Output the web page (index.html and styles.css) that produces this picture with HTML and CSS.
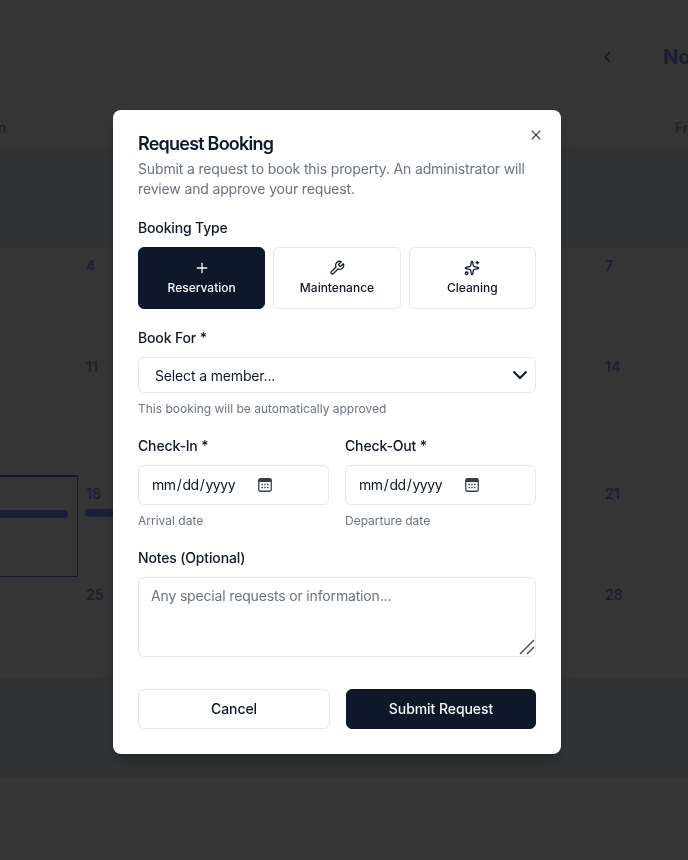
FILE: index.html
```html
<!DOCTYPE html>
<html lang="en">
<head>
<meta charset="utf-8">
<title>Request Booking</title>
<link rel="stylesheet" href="styles.css">
</head>
<body>
<main class="calendar">
  <header class="cal-nav">
    <svg class="cal-chevron" viewBox="0 0 24 24" aria-hidden="true"><path d="m15 18-6-6 6-6"/></svg>
    <h1 class="cal-title">November 2025</h1>
  </header>
  <div class="cal-weekdays">
    <span>Sun</span><span>Mon</span><span>Tue</span><span>Wed</span><span>Thu</span><span>Fri</span><span>Sat</span>
  </div>
  <div class="cal-grid">
    <div class="cell muted"></div><div class="cell muted"></div><div class="cell muted"></div><div class="cell muted"></div><div class="cell muted"></div><div class="cell muted"></div><div class="cell muted"></div>
    <div class="cell">2</div><div class="cell">3</div><div class="cell">4</div><div class="cell">5</div><div class="cell">6</div><div class="cell">7</div><div class="cell">8</div>
    <div class="cell">9</div><div class="cell">10</div><div class="cell">11</div><div class="cell">12</div><div class="cell">13</div><div class="cell">14</div><div class="cell">15</div>
    <div class="cell">16</div><div class="cell selected"><span class="band band-end"></span></div><div class="cell">18<span class="band band-start"></span></div><div class="cell">19</div><div class="cell">20</div><div class="cell">21</div><div class="cell">22</div>
    <div class="cell">23</div><div class="cell">24</div><div class="cell">25</div><div class="cell">26</div><div class="cell">27</div><div class="cell">28</div><div class="cell">29</div>
    <div class="cell muted"></div><div class="cell muted"></div><div class="cell muted"></div><div class="cell muted"></div><div class="cell muted"></div><div class="cell muted"></div><div class="cell muted"></div>
  </div>
</main>

<div class="overlay">
  <form class="modal">
    <button type="button" class="close" aria-label="Close">
      <svg class="icon" viewBox="0 0 24 24" aria-hidden="true"><path d="M18 6 6 18"/><path d="m6 6 12 12"/></svg>
    </button>
    <h2 class="modal-title">Request Booking</h2>
    <p class="modal-desc">Submit a request to book this property. An administrator will review and approve your request.</p>

    <section class="field">
      <label class="label">Booking Type</label>
      <div class="types">
        <button type="button" class="type active">
          <svg class="icon" viewBox="0 0 24 24" aria-hidden="true"><path d="M5 12h14"/><path d="M12 5v14"/></svg>
          <span>Reservation</span>
        </button>
        <button type="button" class="type">
          <svg class="icon" viewBox="0 0 24 24" aria-hidden="true"><path d="M14.7 6.3a1 1 0 0 0 0 1.4l1.6 1.6a1 1 0 0 0 1.4 0l3.77-3.77a6 6 0 0 1-7.94 7.94l-6.91 6.91a2.12 2.12 0 0 1-3-3l6.91-6.91a6 6 0 0 1 7.94-7.94l-3.76 3.76z"/></svg>
          <span>Maintenance</span>
        </button>
        <button type="button" class="type">
          <svg class="icon" viewBox="0 0 24 24" aria-hidden="true"><path d="M11.017 2.814a1 1 0 0 1 1.966 0l1.051 5.558a2 2 0 0 0 1.594 1.594l5.558 1.051a1 1 0 0 1 0 1.966l-5.558 1.051a2 2 0 0 0-1.594 1.594l-1.051 5.558a1 1 0 0 1-1.966 0l-1.051-5.558a2 2 0 0 0-1.594-1.594l-5.558-1.051a1 1 0 0 1 0-1.966l5.558-1.051a2 2 0 0 0 1.594-1.594z"/><path d="M20 2v4"/><path d="M22 4h-4"/><circle cx="4" cy="20" r="2"/></svg>
          <span>Cleaning</span>
        </button>
      </div>
    </section>

    <section class="field">
      <label class="label" for="member">Book For *</label>
      <div class="control">
        <select id="member" class="select"><option>Select a member...</option></select>
        <svg class="select-arrow" viewBox="0 0 16 10" aria-hidden="true"><path d="M1.5 1.5 8 8l6.5-6.5"/></svg>
      </div>
      <p class="hint">This booking will be automatically approved</p>
    </section>

    <div class="dates">
      <section>
        <label class="label" for="checkin">Check-In *</label>
        <div class="control">
          <input id="checkin" class="input" type="date">
          <svg class="date-icon" viewBox="0 0 14 14" aria-hidden="true"><rect class="date-frame" x=".75" y=".75" width="12.5" height="12.5" rx="1.5"/><rect class="date-head" x="1" y="1" width="12" height="3"/><path class="date-dots" d="M3.5 6.5h1.4M6.3 6.5h1.4M9.1 6.5h1.4M3.5 9.5h1.4M6.3 9.5h1.4M9.1 9.5h1.4"/></svg>
        </div>
        <p class="hint">Arrival date</p>
      </section>
      <section>
        <label class="label" for="checkout">Check-Out *</label>
        <div class="control">
          <input id="checkout" class="input" type="date">
          <svg class="date-icon" viewBox="0 0 14 14" aria-hidden="true"><rect class="date-frame" x=".75" y=".75" width="12.5" height="12.5" rx="1.5"/><rect class="date-head" x="1" y="1" width="12" height="3"/><path class="date-dots" d="M3.5 6.5h1.4M6.3 6.5h1.4M9.1 6.5h1.4M3.5 9.5h1.4M6.3 9.5h1.4M9.1 9.5h1.4"/></svg>
        </div>
        <p class="hint">Departure date</p>
      </section>
    </div>

    <section class="field">
      <label class="label" for="notes">Notes (Optional)</label>
      <div class="control">
        <textarea id="notes" class="textarea" placeholder="Any special requests or information..."></textarea>
        <svg class="grip" viewBox="0 0 16 16" aria-hidden="true"><path d="M1 15 15 1"/><path d="M8 15l7-7"/></svg>
      </div>
    </section>

    <div class="actions">
      <button type="button" class="btn btn-outline">Cancel</button>
      <button type="button" class="btn btn-primary">Submit Request</button>
    </div>
  </form>
</div>
</body>
</html>
```

FILE: styles.css
```css
* { box-sizing: border-box; }
html, body { margin: 0; height: 100%; }
body {
  background: #353535;
  overflow: hidden;
  font-family: Inter, "Liberation Sans", sans-serif;
  color: #0f172a;
}

/* Dimmed calendar behind the dialog */
.calendar { width: 1211px; margin-left: -268px; }
.cal-nav {
  height: 114px;
  padding: 43px 0 0 867px;
  display: flex;
  align-items: flex-start;
  gap: 48px;
}
.cal-chevron {
  width: 16px; height: 16px; margin-top: 6px;
  fill: none; stroke: #16181f; stroke-width: 2.6; stroke-linecap: round; stroke-linejoin: round;
}
.cal-title { margin: 0; font-size: 20px; line-height: 28px; font-weight: 700; color: #191e35; }
.cal-weekdays {
  height: 33px;
  display: grid;
  grid-template-columns: repeat(7, 173px);
  text-align: center;
  font-size: 14px;
  line-height: 28px;
  font-weight: 500;
  color: #1f2124;
}
.cal-grid {
  display: grid;
  grid-template-columns: repeat(7, 173px);
  grid-template-rows: 101px 101px 127px 101px 101px 100px;
}
.cell { padding: 8px; font-size: 14px; line-height: 20px; font-weight: 600; color: #1d2030; }
.muted { background: #303233; }
.selected { border: 1px solid #151829; border-top-width: 2px; margin-top: -1px; padding-top: 33px; }
.band { display: block; height: 8px; background: #191f38; border-radius: 4px; }
.band-end { margin-left: -40px; width: 194px; }
.band-start { margin: 5px -20px 0 -1px; border-radius: 4px 0 0 4px; }

/* Dialog */
.overlay {
  position: fixed; inset: 0;
  display: flex; justify-content: center; align-items: flex-start;
  padding: 110px 14px 0 0;
}
.modal {
  position: relative;
  width: 448px;
  padding: 25px;
  background: #fff;
  border-radius: 8px;
  box-shadow: 0 10px 15px -3px rgba(0,0,0,.2), 0 4px 6px -4px rgba(0,0,0,.2);
}
.icon {
  display: block; width: 16px; height: 16px;
  fill: none; stroke: currentColor; stroke-width: 1.9; stroke-linecap: round; stroke-linejoin: round;
}
.close {
  position: absolute; top: 17px; right: 17px;
  padding: 0; border: 0; background: none; color: #374151;
}
.close .icon { stroke-width: 1.6; }
.modal-title { margin: 0; font-size: 18px; line-height: 18px; font-weight: 600; letter-spacing: -.78px; color: #0f172a; }
.modal-desc { margin: 6px 0 0; font-size: 14px; line-height: 20px; letter-spacing: -.15px; color: #6b7280; }
.field, .dates { margin-top: 19px; }
.label { display: block; margin-bottom: 9px; font-size: 14px; line-height: 20px; font-weight: 500; letter-spacing: -.15px; color: #0f172a; }
.hint { margin: 8px 0 0; font-size: 12px; line-height: 16px; color: #6b7280; }

.types { display: grid; grid-template-columns: repeat(3, 1fr); gap: 8px; }
.type {
  display: flex; flex-direction: column; align-items: center; gap: 4px;
  height: 62px; padding: 12px 0;
  border: 1px solid #e5e7eb; border-radius: 6px;
  background: #fff; color: #0f172a;
  font: 500 12px/16px Inter, "Liberation Sans", sans-serif;
}
.type.active { background: #0f172a; border-color: #0f172a; color: #f8fafc; }

.control { position: relative; }
.select {
  display: block; width: 100%; height: 36px;
  padding: 0 16px;
  border: 1px solid #e5e7eb; border-radius: 6px;
  background: #fff; color: #0f172a;
  font: 400 14px Inter, "Liberation Sans", sans-serif;
  letter-spacing: -.15px;
  appearance: none;
}
.select-arrow {
  position: absolute; top: 13px; right: 8px;
  width: 16px; height: 10px;
  fill: none; stroke: #0f172a; stroke-width: 2;
}

.dates { display: grid; grid-template-columns: 1fr 1fr; gap: 16px; }
.input {
  display: block; width: 100%; height: 40px;
  padding: 0 12px 1px;
  border: 1px solid #e5e7eb; border-radius: 6px;
  background: #fff; color: #0f172a;
  font: 400 14px Inter, "Liberation Sans", sans-serif;
  letter-spacing: -.4px;
}
.input::-webkit-calendar-picker-indicator { opacity: 0; }
.date-icon { position: absolute; top: 13px; left: 120px; width: 14px; height: 14px; pointer-events: none; }
.date-frame { fill: none; stroke: #3a3f47; stroke-width: 1.3; }
.date-head { fill: #3a3f47; }
.date-dots { fill: none; stroke: #3a3f47; stroke-width: 1.5; }
.textarea {
  display: block; width: 100%; height: 80px;
  padding: 8px 12px;
  border: 1px solid #e5e7eb; border-radius: 6px;
  background: #fff; color: #0f172a;
  font: 400 14px/20px Inter, "Liberation Sans", sans-serif;
  letter-spacing: -.16px;
  resize: none;
}
.textarea::placeholder { color: #6b7280; }
.grip {
  position: absolute; right: 1px; bottom: 2px; width: 16px; height: 16px;
  fill: none; stroke: #4b4f55; stroke-width: 1.5; pointer-events: none;
}

.actions { display: grid; grid-template-columns: 192px 190px; gap: 16px; margin-top: 32px; }
.btn {
  height: 40px; padding: 0 0 2px; border-radius: 6px;
  font: 500 14px Inter, "Liberation Sans", sans-serif;
  letter-spacing: -.07px;
}
.btn-outline { background: #fff; border: 1px solid #e5e7eb; color: #0f172a; }
.btn-primary { background: #0f172a; border: 1px solid #0f172a; color: #f8fafc; }
```
